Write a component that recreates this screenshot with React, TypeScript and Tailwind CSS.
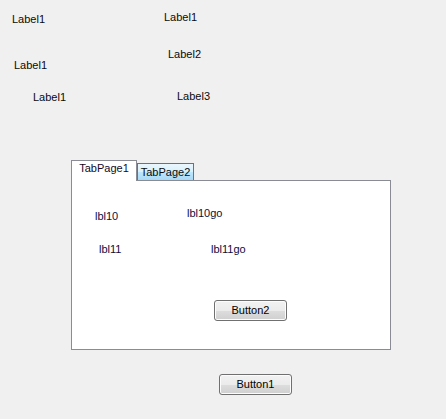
const font = { fontFamily: '"Liberation Sans", Arial, sans-serif' };

// form designer canvas: each control sits at its own x/y on the form
function Label({ text, className }: { text: string; className: string }) {
  return (
    <span className={`absolute whitespace-nowrap text-[11px] leading-[13px] ${className}`}>
      {text}
    </span>
  );
}

function WinButton({ text, className }: { text: string; className: string }) {
  return (
    <button
      className={`absolute flex h-[21px] w-[73px] items-center justify-center rounded-[3px] border border-[#707070] bg-[linear-gradient(to_bottom,#f2f2f2_0%,#ebebeb_50%,#dddddd_51%,#cfcfcf_100%)] text-[11px] leading-[13px] text-black shadow-[inset_0_0_0_1px_#fcfcfc] ${className}`}
    >
      {text}
    </button>
  );
}

export default function App() {
  return (
    <div style={font} className="relative h-[419px] w-[446px] overflow-hidden bg-[#f0f0f0] text-[#0a0a0a]">
      <Label text="Label1" className="left-[12px] top-[13px]" />
      <Label text="Label1" className="left-[164px] top-[11px]" />
      <Label text="Label1" className="left-[14px] top-[59px]" />
      <Label text="Label2" className="left-[168px] top-[48px]" />
      <Label text="Label1" className="left-[33px] top-[91px]" />
      <Label text="Label3" className="left-[177px] top-[90px]" />

      {/* tab control */}
      <div className="absolute left-[71px] top-[160px] flex flex-col">
        <div className="flex items-end">
          <div className="relative z-10 -mb-px flex h-[21px] w-[66px] items-start justify-center border border-b-0 border-[#898c95] bg-white pt-[1px] text-[11px] leading-[13px] text-[#14081f]">
            TabPage1
          </div>
          <div className="flex h-[17px] w-[57px] items-center justify-center border border-b-0 border-[#3c7fb1] bg-[linear-gradient(to_bottom,#eaf6fd,#d9f0fc_50%,#bee6fd_51%,#a7d9f5)] text-[11px] leading-[13px]">
            TabPage2
          </div>
        </div>
        <div className="relative h-[170px] w-[320px] border border-[#898c95] bg-white text-[#0d0d3d]">
          <Label text="lbl10" className="left-[23px] top-[29px]" />
          <Label text="lbl10go" className="left-[115px] top-[26px]" />
          <Label text="lbl11" className="left-[27px] top-[62px]" />
          <Label text="lbl11go" className="left-[139px] top-[62px]" />
          <WinButton text="Button2" className="left-[142px] top-[119px]" />
        </div>
      </div>

      <WinButton text="Button1" className="left-[219px] top-[374px]" />
    </div>
  );
}
